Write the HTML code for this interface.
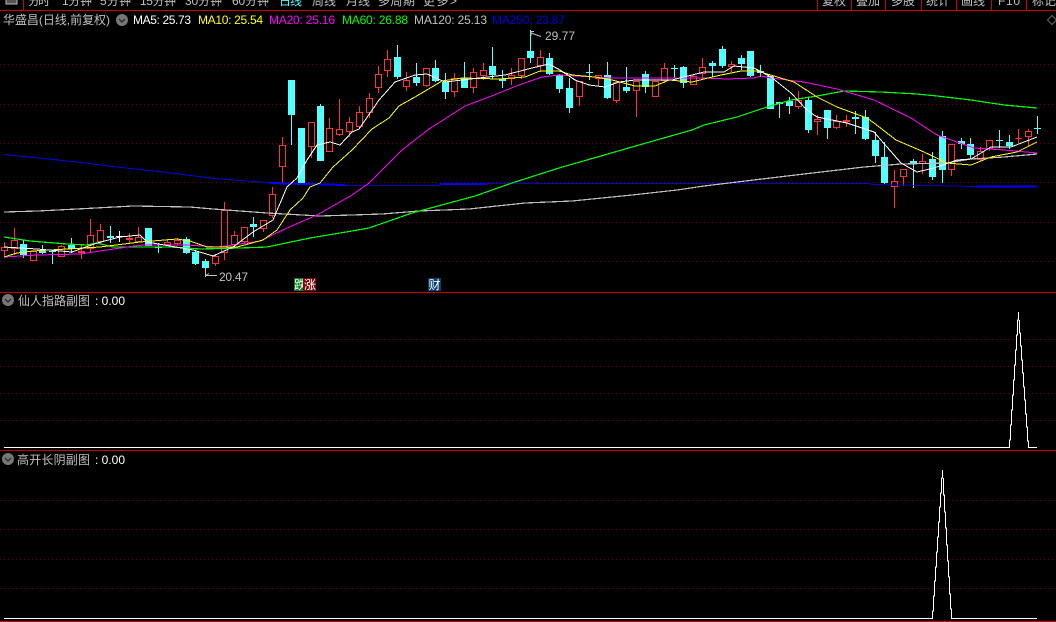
<!DOCTYPE html>
<html><head><meta charset="utf-8"><title>华盛昌</title>
<style>
html,body{margin:0;padding:0;background:#000;width:1056px;height:622px;overflow:hidden}
svg{display:block}
text{font-family:"Liberation Sans","WenQuanYi Zen Hei","Noto Sans CJK SC",sans-serif;font-size:12px}
</style></head><body>
<svg width="1056" height="622" viewBox="0 0 1056 622" xmlns="http://www.w3.org/2000/svg">
<rect width="1056" height="622" fill="#000"/>
<!-- top bar -->
<g fill="#c0c0c0">
<text x="28" y="5" textLength="22">分时</text>
<text x="62" y="5" textLength="30">1分钟</text>
<text x="100" y="5" textLength="31">5分钟</text>
<text x="140" y="5" textLength="36">15分钟</text>
<text x="185" y="5" textLength="37">30分钟</text>
<text x="232" y="5" textLength="37">60分钟</text>
<text x="279" y="5" textLength="23" fill="#54ffff">日线</text>
<text x="312" y="5" textLength="24">周线</text>
<text x="346" y="5" textLength="24">月线</text>
<text x="378" y="5" textLength="37">多周期</text>
<text x="423" y="5" textLength="34">更多&gt;</text>
<text x="822" y="5" textLength="24">复权</text>
<text x="856" y="5" textLength="24">叠加</text>
<text x="891" y="5" textLength="24">多股</text>
<text x="926" y="5" textLength="24">统计</text>
<text x="961" y="5" textLength="24">画线</text>
<text x="998" y="5" textLength="22">F10</text>
<text x="1032" y="5" textLength="24">标记</text>
</g>
<rect x="6" y="-3" width="11" height="7" fill="#555" stroke="#bbb"/>
<path d="M23.5 0V10M817.5 0V10M851.5 0V10M885.5 0V10M921.5 0V10M956.5 0V10M991.5 0V10M1026.5 0V10" stroke="#c80000" shape-rendering="crispEdges"/>
<path d="M0 10.5H1056M0 292.5H1056M0 450.5H1056M0 621.5H1056" stroke="#c80000" shape-rendering="crispEdges"/>
<!-- grid -->
<path d="M0 64.5H1056M0 104.5H1056M0 143.5H1056M0 182.5H1056M0 222.5H1056M0 261.5H1056M0 339.5H1056M0 366.5H1056M0 393.5H1056M0 420.5H1056M0 500.5H1056M0 529.5H1056M0 559.5H1056M0 588.5H1056" stroke="#700000" stroke-dasharray="1 3" shape-rendering="crispEdges"/>
<!-- header -->
<text x="3" y="24" fill="#c0c0c0" textLength="107" lengthAdjust="spacingAndGlyphs">华盛昌(日线,前复权)</text>
<circle cx="122" cy="20" r="6" fill="#777"/><path d="M119 19l3 3 3-3" fill="none" stroke="#222" stroke-width="1.2"/>
<text x="133" y="24" fill="#fff" textLength="58">MA5: 25.73</text>
<text x="198" y="24" fill="#ffff00" textLength="65">MA10: 25.54</text>
<text x="269" y="24" fill="#ff00ff" textLength="66">MA20: 25.16</text>
<text x="342" y="24" fill="#00ff00" textLength="66">MA60: 26.88</text>
<text x="414" y="24" fill="#c0c0c0" textLength="73">MA120: 25.13</text>
<text x="492" y="24" fill="#0000e0" textLength="73">MA250: 23.87</text>
<path d="M1052 15.5l-4.5 4.5 4.5 4.5 4.5-4.5z" fill="none" stroke="#666"/>
<!-- candle wicks + bodies -->
<g shape-rendering="crispEdges">
<path fill="none" stroke="#54ffff" d="M23.5 240V258M42.5 245V254M52.5 251V264M71.5 238V253M110.5 226V243M158.5 243V253M186.5 237V254M195.5 250V265M205.5 259V277M253.5 217V237M291.5 115V145M320.5 104V106M397.5 45V79M416.5 63V86M435.5 60V82M445.5 73V99M464.5 62V88M492.5 47V79M502.5 70V88M530.5 30V63M549.5 53V75M559.5 74V93M569.5 78V113M589.5 64V80M607.5 62V99M626.5 67V93M645.5 71V93M674.5 65V78M683.5 66V88M712.5 61V77M722.5 46V68M741.5 55V70M750.5 51V77M760.5 65V77M779.5 102V118M789.5 97V114M808.5 98V133M827.5 110V139M855.5 111V134M865.5 110V140M875.5 132V163M884.5 142V184M913.5 159V188M932.5 152V180M942.5 131V183M961.5 138V149M970.5 138V159M999.5 130V148M1009.5 135V149M1037.5 116V134"/>
<path fill="#54ffff" d="M20 244h7V255h-7zM39 251h7V253h-7zM49 251h7V252h-7zM68 245h7V249h-7zM107 236h7V238h-7zM145 228h7V246h-7zM155 247h7V248h-7zM183 239h7V253h-7zM192 252h7V264h-7zM202 261h7V268h-7zM250 224h7V227h-7zM288 80h7V115h-7zM298 128h7V185h-7zM317 106h7V161h-7zM394 57h7V77h-7zM413 77h7V83h-7zM432 68h7V81h-7zM442 82h7V92h-7zM461 78h7V88h-7zM489 66h7V75h-7zM499 79h7V81h-7zM527 51h7V58h-7zM546 58h7V74h-7zM556 75h7V89h-7zM566 88h7V108h-7zM586 72h7V73h-7zM604 75h7V98h-7zM623 87h7V91h-7zM642 74h7V87h-7zM671 68h7V69h-7zM680 67h7V83h-7zM709 63h7V66h-7zM719 49h7V66h-7zM738 58h7V64h-7zM747 51h7V76h-7zM757 71h7V73h-7zM767 76h7V109h-7zM776 102h7V104h-7zM786 101h7V106h-7zM805 100h7V130h-7zM824 110h7V128h-7zM852 117h7V119h-7zM862 117h7V139h-7zM872 140h7V156h-7zM881 157h7V183h-7zM910 161h7V164h-7zM929 159h7V177h-7zM939 136h7V170h-7zM958 141h7V144h-7zM967 144h7V155h-7zM996 140h7V141h-7zM1006 142h7V146h-7zM1034 128h7V129h-7z"/>
<path fill="#fff" d="M116 236h7V237h-7zM119 231h1V242h-1z"/>
<path fill="none" stroke="#ff3232" d="M4.5 242V247M4.5 251V256M14.5 228V240M14.5 249V255M61.5 245V246M81.5 245V251M81.5 253V259M90.5 219V235M90.5 249V253M100.5 224V230M100.5 242V243M129.5 233V238M129.5 240V244M138.5 227V237M167.5 239V242M167.5 245V246M177.5 238V240M177.5 244V245M215.5 254V256M215.5 264V266M224.5 202V210M224.5 253V260M234.5 231V235M234.5 245V246M244.5 242V243M263.5 229V232M272.5 187V194M272.5 216V218M282.5 137V145M282.5 167V184M311.5 147V158M329.5 118V128M339.5 99V129M339.5 135V136M349.5 117V122M349.5 132V137M359.5 106V112M359.5 127V129M369.5 93V98M369.5 113V118M378.5 66V74M378.5 88V93M387.5 50V59M387.5 71V77M406.5 72V80M406.5 87V91M426.5 86V87M454.5 73V78M454.5 92V97M473.5 68V72M473.5 88V93M483.5 63V70M483.5 76V80M511.5 68V75M511.5 79V85M521.5 76V79M540.5 50V57M540.5 66V72M579.5 97V106M598.5 79V86M616.5 101V103M636.5 91V117M664.5 63V68M664.5 81V83M693.5 75V76M702.5 58V67M702.5 74V80M731.5 61V64M731.5 67V72M798.5 91V100M798.5 107V109M817.5 115V119M817.5 122V135M836.5 115V121M836.5 128V129M846.5 115V120M846.5 122V127M894.5 170V181M894.5 187V208M903.5 177V186M922.5 154V161M922.5 164V174M951.5 170V176M980.5 147V151M980.5 160V161M989.5 149V151M1018.5 129V138M1018.5 139V143M1028.5 129V131M1028.5 137V146"/>
<path fill="none" stroke="#ff3232" d="M1.5 247.5h6V250.5h-6zM11.5 240.5h6V248.5h-6zM30.5 251.5h6V260.5h-6zM58.5 246.5h6V256.5h-6zM78.5 251.5h6V252.5h-6zM87.5 235.5h6V248.5h-6zM97.5 230.5h6V241.5h-6zM126.5 238.5h6V239.5h-6zM135.5 237.5h6V241.5h-6zM164.5 242.5h6V244.5h-6zM174.5 240.5h6V243.5h-6zM212.5 256.5h6V263.5h-6zM221.5 210.5h6V252.5h-6zM231.5 235.5h6V244.5h-6zM241.5 227.5h6V241.5h-6zM260.5 220.5h6V228.5h-6zM269.5 194.5h6V215.5h-6zM279.5 145.5h6V166.5h-6zM308.5 122.5h6V146.5h-6zM326.5 128.5h6V151.5h-6zM336.5 129.5h6V134.5h-6zM346.5 122.5h6V131.5h-6zM356.5 112.5h6V126.5h-6zM366.5 98.5h6V112.5h-6zM375.5 74.5h6V87.5h-6zM384.5 59.5h6V70.5h-6zM403.5 80.5h6V86.5h-6zM423.5 68.5h6V85.5h-6zM451.5 78.5h6V91.5h-6zM470.5 72.5h6V87.5h-6zM480.5 70.5h6V75.5h-6zM508.5 75.5h6V78.5h-6zM518.5 58.5h6V75.5h-6zM537.5 57.5h6V65.5h-6zM576.5 81.5h6V96.5h-6zM595.5 75.5h6V78.5h-6zM613.5 82.5h6V100.5h-6zM633.5 81.5h6V90.5h-6zM652.5 81.5h6V96.5h-6zM661.5 68.5h6V80.5h-6zM690.5 76.5h6V84.5h-6zM699.5 67.5h6V73.5h-6zM728.5 64.5h6V66.5h-6zM795.5 100.5h6V106.5h-6zM814.5 119.5h6V121.5h-6zM833.5 121.5h6V127.5h-6zM843.5 120.5h6V121.5h-6zM891.5 181.5h6V186.5h-6zM900.5 169.5h6V176.5h-6zM919.5 161.5h6V163.5h-6zM948.5 144.5h6V169.5h-6zM977.5 151.5h6V159.5h-6zM986.5 140.5h6V148.5h-6zM1015.5 138.5h6V138.5h-6zM1025.5 131.5h6V136.5h-6z"/>
</g>
<!-- MA lines -->
<g fill="none" stroke-linejoin="round" shape-rendering="crispEdges">
<polyline stroke="#0000e6" stroke-width="1" points="4,154.5 38,158 77,162 117,167 163,172 210,178 258,182 270,182.500"/>
<polyline stroke="#0000ff" stroke-width="2" points="270,183 345,185"/>
<polyline stroke="#0000c8" stroke-width="1" points="345,185.500 440,185.500 440,183.500 870,183.500 871,184.500 927,185.500 976,186.500"/>
<polyline stroke="#0000ff" stroke-width="2" points="440,184 488,184"/>
<polyline stroke="#0000ff" stroke-width="2" points="976,186.500 1037,186.500"/>
<polyline stroke="#c0c0c0" stroke-width="1.2" points="4,212 38,211 77,209 133,206 190,207 213,209 240,211 267,213 320,216 352,215 382,214 419,211 469,209 525,203 572,201 632,195 677,190 704,186 737,182 804,174 864,167 901,164 947,163 971,159 1004,157 1037,154"/>
<polyline stroke="#00ff00" stroke-width="1.2" points="4,237 30,241 67,244 87,245 97,243 113,247 170,247 200,249 240,248 267,247 310,238 352,231 369,228 412,213 475,196 512,183 559,168 639,145 692,130 704,125 737,117 767,107 791,100 817,96 844,91 881,92 917,94 937,96 971,100 1004,105 1037,108"/>
<polyline stroke="#ff00ff" stroke-width="1" points="4,257 37,255 80,254 100,251 127,247 143,245 187,245 217,247 233,245 260,241 287,228 317,215 352,195 369,183 382,170 402,150 429,129 465,106 489,97 519,85 542,77 559,75 612,78 704,78 727,79 754,78 761,76 771,78 804,82 837,89 874,100 911,118 937,135 974,148 1004,150 1037,153"/>
<polyline stroke="#ffff00" stroke-width="1" points="4,257 17,253 33,251 67,249 100,247 140,242 177,239 190,241 207,247 237,247 263,240 277,230 290,210 303,198 310,187 320,183 333,167 352,150 372,129 389,118 399,106 415,97 442,81 462,78 499,79 525,77 540,71 559,71 572,75 595,77 612,80 635,86 655,86 669,80 692,82 704,79 721,75 741,71 757,71 774,76 794,82 817,97 837,107 867,118 874,123 896,140 924,152 947,163 971,165 991,157 1017,152 1037,142"/>
<polyline stroke="#ffffff" stroke-width="1" points="4,247 37,249 72,252 97,243 120,237 140,235 147,242 193,250 213,256 233,247 253,232 273,220 287,187 297,178 307,160 317,145 330,142 340,145 352,132 359,129 379,100 395,82 415,75 427,74 445,82 479,78 505,75 532,68 549,64 560,70 575,80 589,85 605,87 619,82 635,80 672,80 704,72 724,72 734,66 754,68 771,77 791,93 807,110 817,117 847,123 874,132 887,147 901,163 917,172 934,168 957,160 971,159 991,147 1011,147 1037,137"/>
</g>
<!-- price labels -->
<path d="M531 36V31.5H534M531 33L541 36.5" fill="none" stroke="#c0c0c0"/>
<text x="545" y="40" fill="#c0c0c0" textLength="30">29.77</text>
<path d="M205.500 269V275.500H217M205.500 275.500L209 273.500" fill="none" stroke="#c0c0c0"/>
<text x="219" y="281" fill="#c0c0c0" textLength="29">20.47</text>
<!-- markers -->
<rect x="294" y="278" width="10" height="13" fill="#0a7a1e"/>
<text x="294" y="289" fill="#fff">跌</text>
<rect x="303" y="278" width="13" height="13" fill="#7a0808"/>
<text x="304" y="289" fill="#fff" textLength="12">涨</text>
<rect x="428" y="278" width="13" height="13" fill="#0a3c6e"/>
<text x="428.500" y="289" fill="#fff">财</text>
<!-- subpanel 1 -->
<circle cx="8" cy="300" r="6" fill="#777"/><path d="M5 299l3 3 3-3" fill="none" stroke="#222" stroke-width="1.2"/>
<text x="18" y="305" fill="#c0c0c0" textLength="72">仙人指路副图</text>
<text x="95" y="305" fill="#fff" textLength="30">: 0.00</text>
<path fill="none" stroke="#fff" d="M4 447.500H1009.500V440H1010.500V425H1011.500V410H1012.500V395H1013.500V380H1014.500V365H1015.500V350H1016.500V335H1017.500V320H1018.500V312M1019.500 320V333H1020.500V346H1021.500V360H1022.500V373H1023.500V387H1024.500V400H1025.500V414H1026.500V427H1027.500V441H1028.500V447.500H1037" shape-rendering="crispEdges"/>
<!-- subpanel 2 -->
<circle cx="8" cy="459" r="6" fill="#777"/><path d="M5 458l3 3 3-3" fill="none" stroke="#222" stroke-width="1.2"/>
<text x="17" y="464" fill="#c0c0c0" textLength="73">高开长阴副图</text>
<text x="95" y="464" fill="#fff" textLength="30">: 0.00</text>
<path fill="none" stroke="#fff" d="M4 618.500H932.500V611H933.500V596H934.500V581H935.500V567H936.500V552H937.500V537H938.500V522H939.500V507H940.500V493H941.500V478H942.500V470M943.500 478V495H944.500V512H945.500V528H946.500V545H947.500V561H948.500V577H949.500V594H950.500V609H951.500V618.500H1037" shape-rendering="crispEdges"/>
</svg>
</body></html>
